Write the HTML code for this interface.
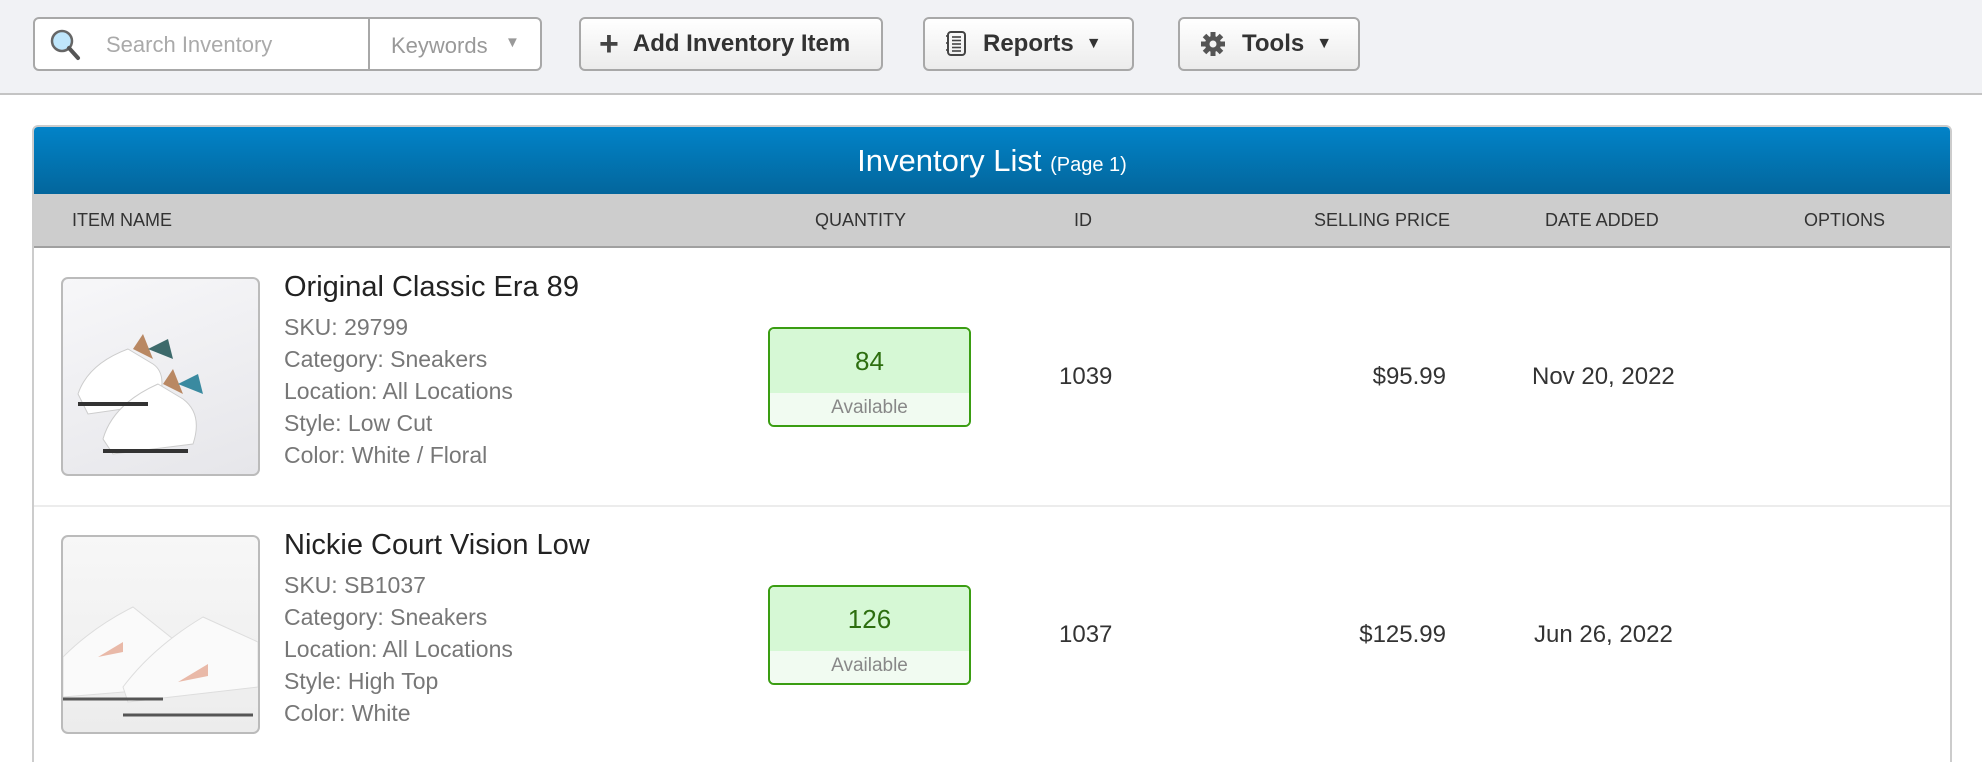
<!DOCTYPE html>
<html><head><meta charset="utf-8"><style>
*{box-sizing:border-box;margin:0;padding:0}
html{width:1982px;height:762px;overflow:hidden}
body{width:1982px;height:762px;overflow:hidden;background:#fff;font-family:"Liberation Sans",sans-serif;position:relative}
.top{position:absolute;left:0;top:0;width:1982px;height:95px;background:#f1f2f5;border-bottom:2px solid #c4c4c4}
.btn{position:absolute;top:17px;height:54px;border:2px solid #a8a8a8;border-radius:6px;background:linear-gradient(#fff,#ececec);font-size:24px;font-weight:bold;color:#333;display:flex;align-items:center}
.search{position:absolute;left:33px;top:17px;width:509px;height:54px;border:2px solid #a8a8a8;border-radius:6px;background:#fff}
.abs{position:absolute;white-space:nowrap}
.panel{position:absolute;left:32px;top:125px;width:1920px;height:660px;border:2px solid #ccc;border-bottom:none;border-radius:6px 6px 0 0;overflow:hidden}
.blue{height:67px;background:linear-gradient(#0283c8,#03669c);color:#fff;text-align:center;font-size:31px;line-height:67px}
.gray{height:54px;background:#cdcdcd;border-bottom:2px solid #a0a0a0;position:relative;font-size:18px;color:#333}
.gray span{position:absolute;top:16px}
.img{position:absolute;width:199px;height:199px;border:2px solid #bbb;border-radius:7px;background:linear-gradient(160deg,#f7f7f9,#e6e6ea)}
.name{font-size:29px;color:#222}
.sub{font-size:23px;color:#777}
.qty{position:absolute;left:768px;width:203px;height:100px;border:2px solid #3a9d12;border-radius:6px;overflow:hidden;text-align:center}
.qty .t{height:64px;background:#d6f8d5;color:#2d6e0f;font-size:26px;line-height:64px}
.qty .b{height:34px;background:#f1fbf1;color:#888;font-size:19px;line-height:30px}
.val{font-size:24px;color:#333}
</style></head><body>
<div class="top"></div>
<div class="search">
 <svg class="abs" style="left:14px;top:9px" width="34" height="34" viewBox="0 0 34 34"><circle cx="13" cy="13" r="10" fill="#bfe6fb" stroke="#666" stroke-width="2.5"/><line x1="20" y1="20" x2="29" y2="30" stroke="#555" stroke-width="4" stroke-linecap="round"/></svg>
 <span class="abs" style="left:71px;top:13px;font-size:22px;color:#aaa">Search Inventory</span>
 <div class="abs" style="left:333px;top:0;width:2px;height:50px;background:#a8a8a8"></div>
 <span class="abs" style="left:356px;top:14px;font-size:22px;color:#999">Keywords</span>
 <span class="abs" style="left:470px;top:15px;font-size:15px;color:#999">▼</span>
</div>
<div class="btn" style="left:579px;width:304px"><span style="font-size:34px;margin:0 14px 0 18px;font-weight:bold;color:#444">+</span>Add Inventory Item</div>
<div class="btn" style="left:923px;width:211px">
 <svg style="margin:0 16px 0 20px" width="22" height="26" viewBox="0 0 22 26"><rect x="3" y="1" width="17" height="23" rx="3" fill="none" stroke="#444" stroke-width="2"/><g stroke="#444" stroke-width="1.6"><line x1="7" y1="6" x2="16" y2="6"/><line x1="7" y1="9.5" x2="16" y2="9.5"/><line x1="7" y1="13" x2="16" y2="13"/><line x1="7" y1="16.5" x2="16" y2="16.5"/><line x1="7" y1="20" x2="16" y2="20"/><line x1="1" y1="5" x2="4" y2="5"/><line x1="1" y1="12" x2="4" y2="12"/><line x1="1" y1="19" x2="4" y2="19"/></g></svg>Reports<span style="font-size:16px;margin-left:12px">▼</span></div>
<div class="btn" style="left:1178px;width:182px">
 <svg style="margin:0 16px 0 20px" width="26" height="26" viewBox="0 0 26 26"><g fill="#555"><circle cx="13" cy="13" r="8"/><rect x="10.5" y="1" width="5" height="24"/><rect x="1" y="10.5" width="24" height="5"/><rect x="10.5" y="1" width="5" height="24" transform="rotate(45 13 13)"/><rect x="10.5" y="1" width="5" height="24" transform="rotate(-45 13 13)"/></g><circle cx="13" cy="13" r="3.5" fill="#f3f3f3"/></svg>Tools<span style="font-size:16px;margin-left:12px">▼</span></div>

<div class="panel">
 <div class="blue">Inventory List <span style="font-size:20px">(Page 1)</span></div>
 <div class="gray">
  <span style="left:38px">ITEM NAME</span>
  <span style="left:781px">QUANTITY</span>
  <span style="left:1040px">ID</span>
  <span style="left:1280px">SELLING PRICE</span>
  <span style="left:1511px">DATE ADDED</span>
  <span style="left:1770px">OPTIONS</span>
 </div>
 <div style="position:absolute;left:0;top:378px;width:1920px;height:2px;background:#ececec"></div>
</div>

<!-- row 1 -->
<div class="img" style="left:61px;top:277px">
 <svg width="195" height="195" viewBox="0 0 195 195"><g fill="#fff" stroke="#ccc"><path d="M15 115 q10-30 50-45 l25 15 q15 10 5 40 l-70 10 z"/><path d="M40 160 q10-35 55-55 l25 15 q20 15 10 45 l-80 10 z"/></g><path d="M70 70 l10-15 10 25z" fill="#b98863"/><path d="M100 105 l10-15 10 25z" fill="#b98863"/><path d="M85 70 l20-10 5 20z" fill="#3d6a6b"/><path d="M115 105 l20-10 5 20z" fill="#3a8aa0"/><path d="M15 125 h70 M40 172 h85" stroke="#333" stroke-width="4"/></svg>
</div>
<div class="abs name" style="left:284px;top:271px">Original Classic Era 89</div>
<div class="abs sub" style="left:284px;top:311px;line-height:32px">SKU: 29799<br>Category: Sneakers<br>Location: All Locations<br>Style: Low Cut<br>Color: White / Floral</div>
<div class="qty" style="top:327px"><div class="t">84</div><div class="b">Available</div></div>
<div class="abs val" style="left:1059px;top:363px">1039</div>
<div class="abs val" style="right:536px;top:363px">$95.99</div>
<div class="abs val" style="left:1532px;top:363px">Nov 20, 2022</div>

<!-- row 2 -->
<div class="img" style="left:61px;top:535px;background:linear-gradient(#f7f7f7,#ececec)">
 <svg width="195" height="195" viewBox="0 0 195 195"><g fill="#fafafa" stroke="#ddd"><path d="M0 120 q30-30 70-50 l50 40 v40 l-120 10z"/><path d="M60 150 q30-40 80-70 l55 25 v45 l-130 15z"/></g><path d="M35 120 l25-15 v10z M115 145 l30-18 v12z" fill="#e9b9a8"/><path d="M0 162 h100 M60 178 h130" stroke="#555" stroke-width="3"/></svg>
</div>
<div class="abs name" style="left:284px;top:529px">Nickie Court Vision Low</div>
<div class="abs sub" style="left:284px;top:569px;line-height:32px">SKU: SB1037<br>Category: Sneakers<br>Location: All Locations<br>Style: High Top<br>Color: White</div>
<div class="qty" style="top:585px"><div class="t">126</div><div class="b">Available</div></div>
<div class="abs val" style="left:1059px;top:621px">1037</div>
<div class="abs val" style="right:536px;top:621px">$125.99</div>
<div class="abs val" style="left:1534px;top:621px">Jun 26, 2022</div>
</body></html>
